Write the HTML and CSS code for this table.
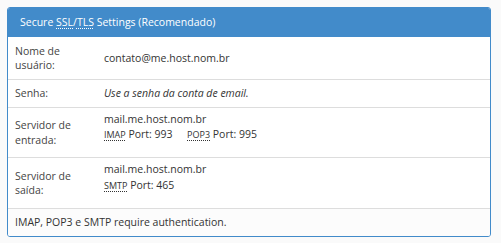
FILE: index.html
```html
<!DOCTYPE html>
<html lang="pt">
<head>
    <meta charset="UTF-8">
    <title>Configurações de email</title>
    <link rel="stylesheet" href="styles.css">
</head>
<body>
    <div class="panel">
        <div class="panel-heading">
            Secure <abbr title="Secure Sockets Layer">SSL</abbr>/<abbr title="Transport Layer Security">TLS</abbr> Settings (Recomendado)
        </div>
        <table class="settings">
            <tr>
                <td class="label">Nome de usuário:</td>
                <td class="value">contato@me.host.nom.br</td>
            </tr>
            <tr>
                <td class="label">Senha:</td>
                <td class="value"><em>Use a senha da conta de email.</em></td>
            </tr>
            <tr>
                <td class="label">Servidor de entrada:</td>
                <td class="value server">
                    <div>mail.me.host.nom.br</div>
                    <div>
                        <abbr class="proto" title="Internet Message Access Protocol">IMAP</abbr> Port: 993
                        <span class="gap"></span>
                        <abbr class="proto" title="Post Office Protocol 3">POP3</abbr> Port: 995
                    </div>
                </td>
            </tr>
            <tr>
                <td class="label">Servidor de saída:</td>
                <td class="value server">
                    <div>mail.me.host.nom.br</div>
                    <div>
                        <abbr class="proto" title="Simple Mail Transfer Protocol">SMTP</abbr> Port: 465
                    </div>
                </td>
            </tr>
            <tr>
                <td class="note" colspan="2">IMAP, POP3 e SMTP require authentication.</td>
            </tr>
        </table>
    </div>
</body>
</html>
```

FILE: styles.css
```css
:root {
    --primary-color: #428bca;
    --border-color: #dddddd;
    --text-color: #333;
    --label-color: #444;
}

body {
    font-family: 'Open Sans', sans-serif;
    font-size: 10.5px;
    color: var(--text-color);
    background-color: #fafafa;
    margin: 0;
    padding: 7px 10px 0 7px;
}

.panel {
    width: 482px;
    border: 1px solid var(--primary-color);
    border-radius: 3px;
    background-color: #fff;
    overflow: hidden;
}

.panel-heading {
    background-color: var(--primary-color);
    color: white;
    height: 29px;
    line-height: 29px;
    padding: 0 12px;
}

.panel-heading abbr {
    text-decoration: underline dotted;
    text-underline-offset: 2px;
}

.settings {
    width: 100%;
    border-collapse: collapse;
}

.settings td {
    border-top: 1px solid var(--border-color);
    padding: 6.5px 7px;
    line-height: 14.25px;
    vertical-align: middle;
}

.settings tr:first-child td {
    border-top: none;
}

.label {
    width: 75px;
    color: var(--label-color);
}

/* host + ports block sits a bit above the middle */
.value.server {
    padding-top: 4px;
    padding-bottom: 14.5px;
    line-height: 15.5px;
}

.proto {
    font-size: 9px;
    text-decoration: underline dotted;
    text-underline-offset: 2px;
    cursor: help;
}

.gap {
    display: inline-block;
    width: 9px;
}

.note {
    background-color: #fcfcfc;
}
```
